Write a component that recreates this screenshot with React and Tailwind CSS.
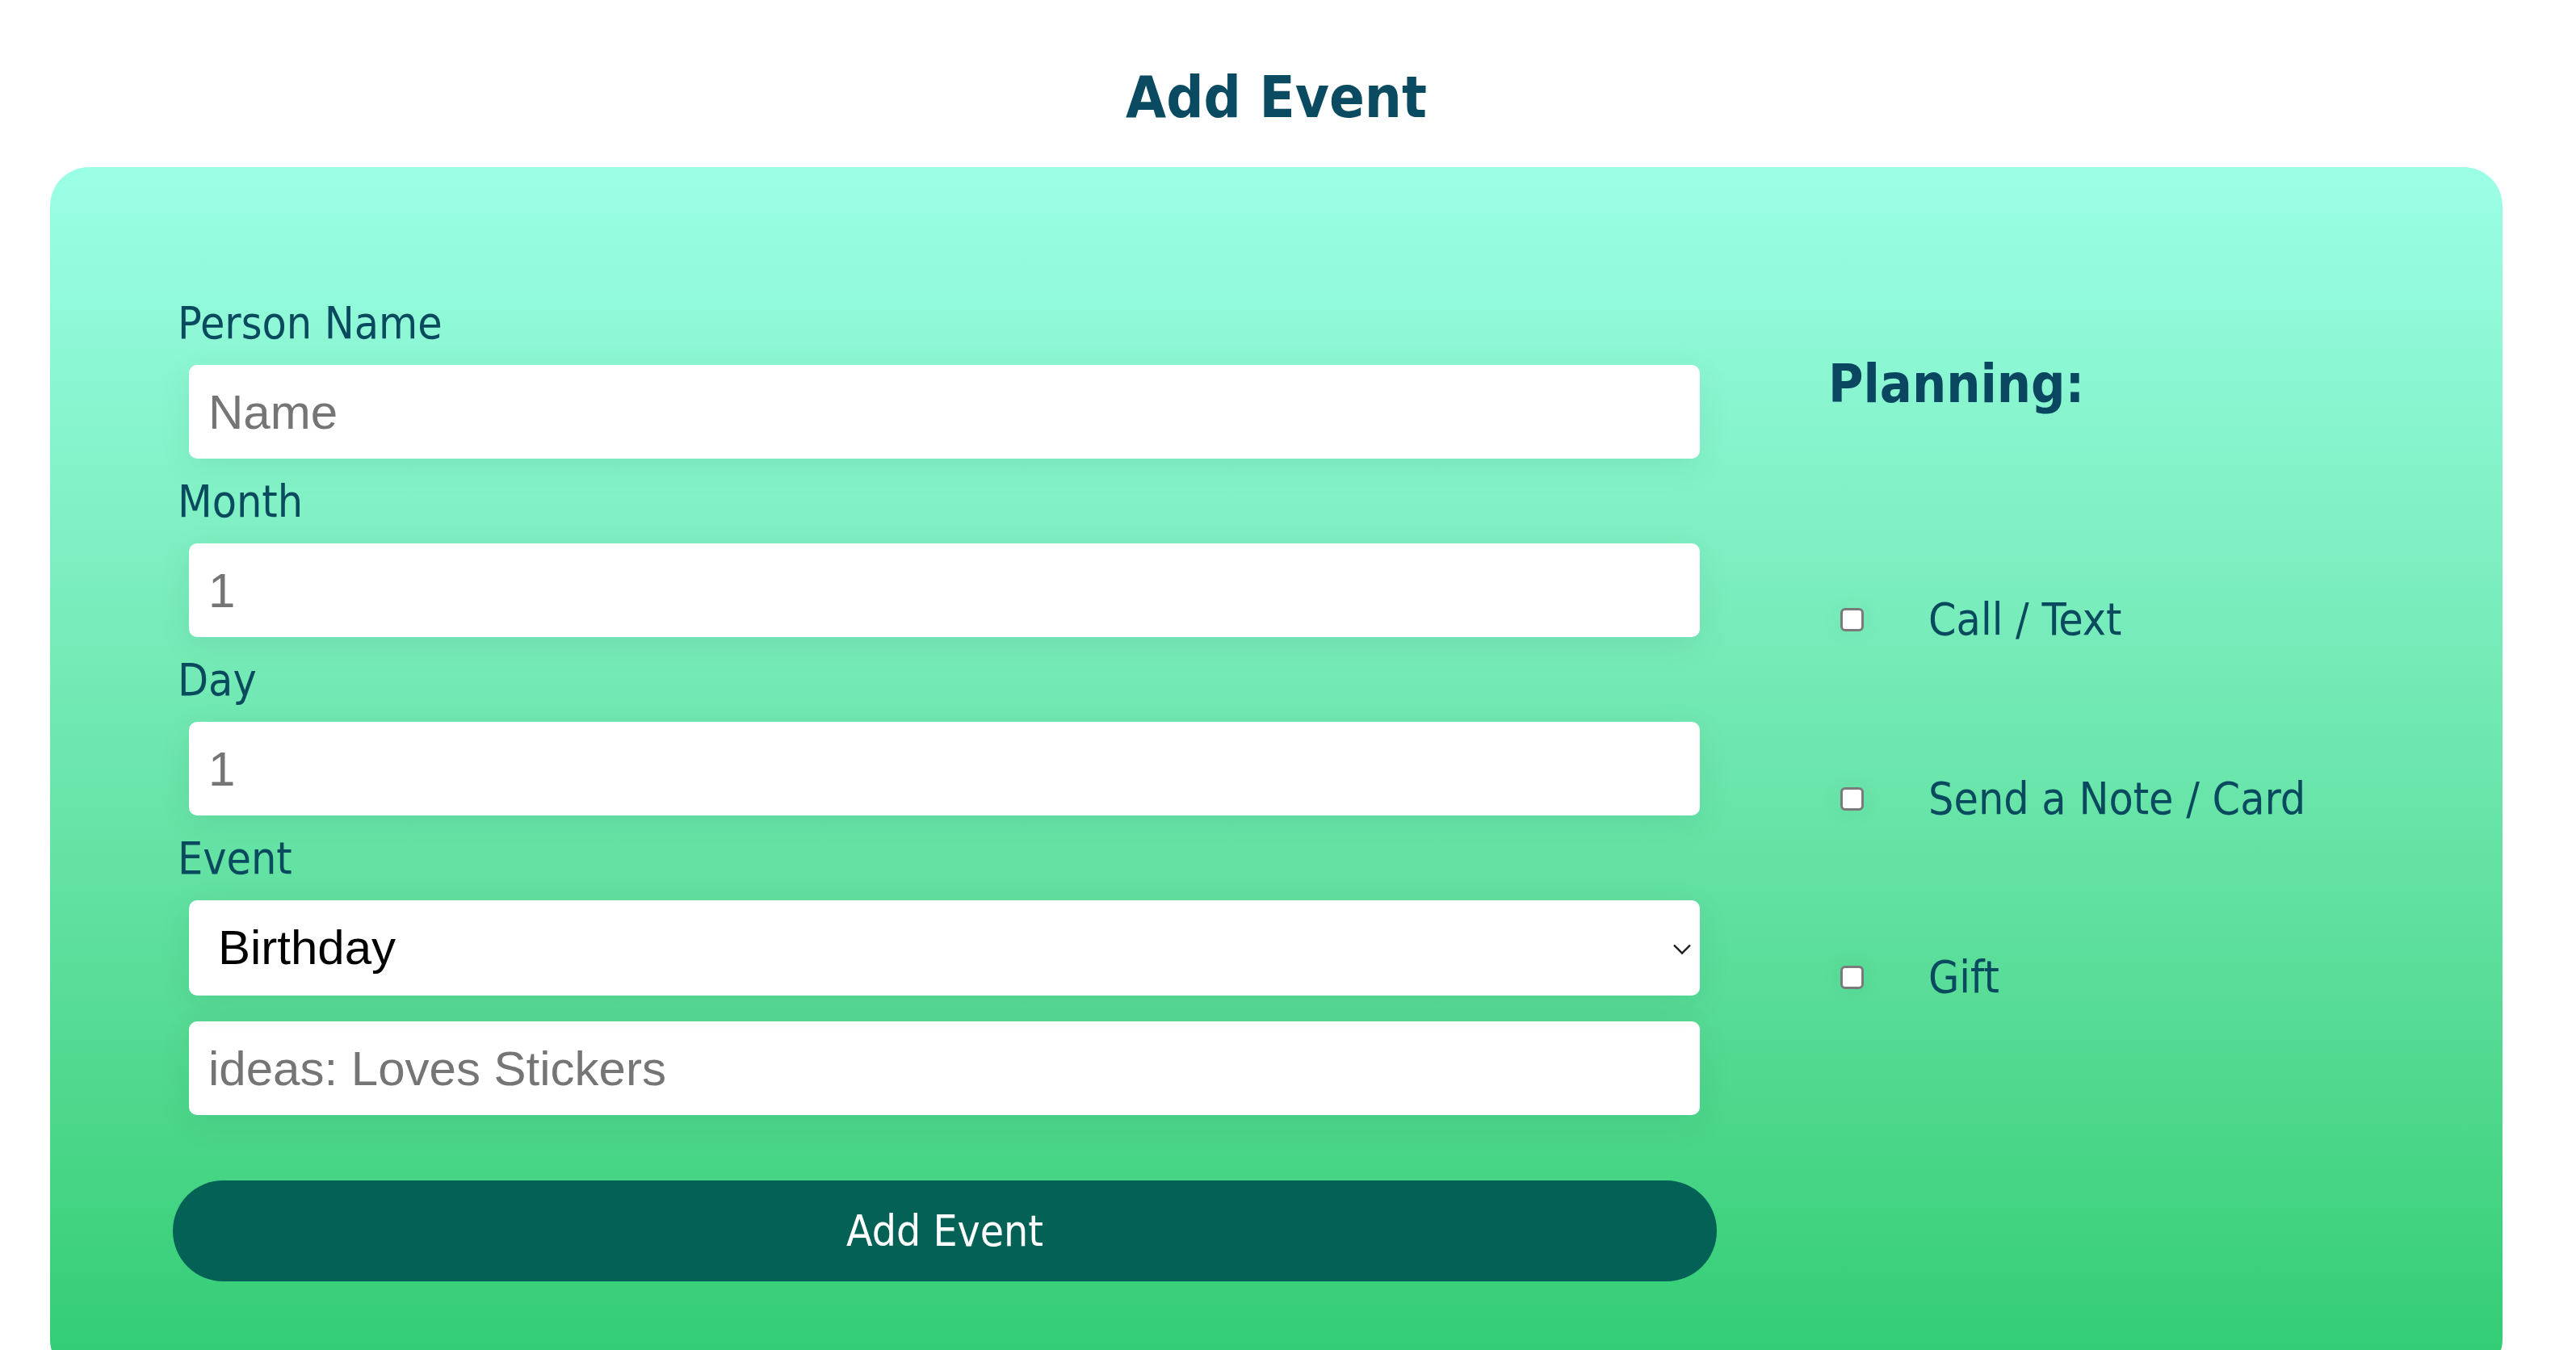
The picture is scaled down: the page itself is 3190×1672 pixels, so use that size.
import React from 'react';

const narrow = "font-['Liberation_Sans_Narrow','DejaVu_Sans_Condensed','Roboto',sans-serif]";

const Label = ({ children, first }) => (
  <label
    className={`block pl-[6px] text-[55px] leading-[72px] text-[#0a4a5e] ${first ? '' : 'mt-[17px]'}`}
  >
    {children}
  </label>
);

const TextInput = ({ placeholder, className = '' }) => (
  <input
    type="text"
    placeholder={placeholder}
    className={`mx-[20px] block h-[116px] w-[1871px] rounded-[10px] bg-white px-[24px] font-['Liberation_Sans',Arial,sans-serif] text-[60px] text-black placeholder:text-[#757575] shadow-[0_10px_40px_rgba(0,60,40,0.08)] outline-none ${className}`}
  />
);

const CheckRow = ({ label, className = '' }) => (
  <div className={`flex h-[100px] items-center ${className}`}>
    <span className="ml-[15px] h-[29px] w-[29px] rounded-[6px] border-[3px] border-[#7a7a7a] bg-white shadow-[0_0_30px_rgba(0,60,40,0.06)]" />
    <span className="ml-[80px] text-[55px] text-[#0a4a5e]">{label}</span>
  </div>
);

export default function App() {
  return (
    <div className={`min-h-[1672px] overflow-hidden bg-white pl-[62px] pr-[91px] ${narrow}`}>
      <h1 className="h-[207px] pt-[84px] text-center text-[72px] font-bold leading-none text-[#0b4b61]">
        Add Event
      </h1>

      <div className="flex min-h-[1500px] rounded-[48px] bg-linear-to-b from-[#9bffe6] to-[#2ecc71]">
        {/* form column */}
        <div className="ml-[152px] w-[1912px] pt-[157px]">
          <Label first>Person Name</Label>
          <TextInput placeholder="Name" className="mt-[16px]" />

          <Label>Month</Label>
          <TextInput placeholder="1" className="mt-[16px]" />

          <Label>Day</Label>
          <TextInput placeholder="1" className="mt-[16px]" />

          <Label>Event</Label>
          <div className="relative mx-[20px] mt-[16px] h-[118px] w-[1871px]">
            <select
              defaultValue="Birthday"
              className="h-full w-full appearance-none rounded-[10px] bg-white pl-[36px] font-['Liberation_Sans',Arial,sans-serif] text-[60px] text-black shadow-[0_10px_40px_rgba(0,60,40,0.08)] outline-none"
            >
              <option>Birthday</option>
              <option>Anniversary</option>
              <option>Other</option>
            </select>
            <svg
              className="pointer-events-none absolute right-[11px] top-[54px] h-[14px] w-[22px]"
              viewBox="0 0 22 14"
              fill="none"
              stroke="#1a1a1a"
              strokeWidth="2.4"
            >
              <path d="M1 1.5 L11 11.5 L21 1.5" />
            </svg>
          </div>

          <TextInput placeholder="ideas: Loves Stickers" className="mt-[32px]" />

          <button className="mt-[81px] flex h-[125px] w-[1912px] items-center justify-center rounded-full bg-[#036155] text-[53px] text-white">
            Add Event
          </button>
        </div>

        {/* planning column */}
        <div className="ml-[138px] pt-[236px]">
          <h2 className="text-[66px] font-bold leading-none text-[#0a4660]">Planning:</h2>
          <CheckRow label="Call / Text" className="mt-[208px]" />
          <CheckRow label="Send a Note / Card" className="mt-[122px]" />
          <CheckRow label="Gift" className="mt-[121px]" />
        </div>
      </div>
    </div>
  );
}
